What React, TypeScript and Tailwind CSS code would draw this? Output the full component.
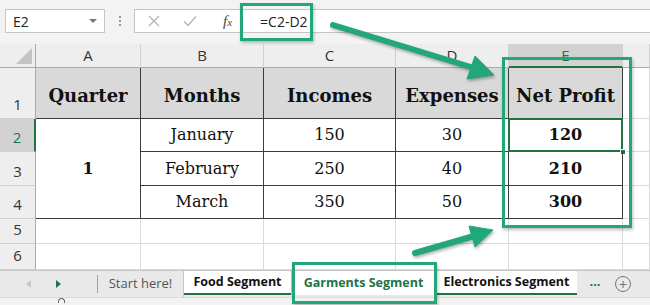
import React from 'react';

const serif = { fontFamily: '"DejaVu Serif", "Liberation Serif", serif' };
const ui = { fontFamily: '"Open Sans", "Noto Sans", Arial, sans-serif' };

const cols = ['A', 'B', 'C', 'D', 'E', ''];

const rows = [
  { n: 2, month: 'January', inc: '150', exp: '30', net: '120' },
  { n: 3, month: 'February', inc: '250', exp: '40', net: '210' },
  { n: 4, month: 'March', inc: '350', exp: '50', net: '300' },
];

function RowHead({ n, active }: { n: number; active?: boolean }) {
  return (
    <div
      className={
        'flex items-end justify-center pb-[3px] text-[15px] border-b border-[#d0d0d0] ' +
        (active
          ? 'bg-[#d2d2d2] text-[#217346] border-r-2 border-r-[#217346]'
          : 'bg-[#eeeeee] text-[#333] border-r border-r-[#ababab]')
      }
      style={ui}
    >
      {n}
    </div>
  );
}

function Cell({ children, bold, className = '' }: { children?: React.ReactNode; bold?: boolean; className?: string }) {
  return (
    <div
      className={
        'flex items-center justify-center border-r border-b border-[#3c3c3c] text-[16px] text-[#111] ' +
        (bold ? 'font-bold ' : '') +
        className
      }
      style={serif}
    >
      {children}
    </div>
  );
}

function Empty() {
  return <div className="border-r border-b border-[#dadada] bg-white" />;
}

export default function App() {
  return (
    <div className="relative w-[650px] h-[305px] overflow-hidden bg-white" style={ui}>
      {/* Formula bar */}
      <div className="h-[44px] bg-[#f3f3f3] flex items-start pt-[9px] pl-[5px]">
        <div className="w-[100px] h-[24px] bg-white border border-[#c6c6c6] flex items-center justify-between px-[7px] text-[14px] text-[#222]">
          <span>E2</span>
          <span className="w-0 h-0 border-l-[4px] border-r-[4px] border-t-[4px] border-l-transparent border-r-transparent border-t-[#777]" />
        </div>
        <div className="w-[29px] h-[24px] flex flex-col items-center justify-center gap-[2px]">
          <span className="w-[2px] h-[2px] bg-[#999]" />
          <span className="w-[2px] h-[2px] bg-[#999]" />
          <span className="w-[2px] h-[2px] bg-[#999]" />
        </div>
        <div className="flex-1 h-[24px] bg-white border border-[#c6c6c6] border-r-0 flex items-center text-[14px]">
          <svg width="12" height="12" viewBox="0 0 12 12" className="ml-[13px]">
            <path d="M1 1 L11 11 M11 1 L1 11" stroke="#b3b3b3" strokeWidth="1.3" />
          </svg>
          <svg width="14" height="12" viewBox="0 0 14 12" className="ml-[23px]">
            <path d="M1 6.5 L5 10.5 L13 1.5" stroke="#b3b3b3" strokeWidth="1.4" fill="none" />
          </svg>
          <span className="ml-[26px] italic text-[15px] text-[#444]" style={{ fontFamily: '"Liberation Serif", serif' }}>
            f<span className="text-[11px]">x</span>
          </span>
          <span className="ml-[28px] text-[#222]">=C2-D2</span>
        </div>
      </div>

      {/* Sheet grid */}
      <div className="grid grid-cols-[36px_105px_123px_132px_113px_114px_1fr] grid-rows-[24px_51px_33px_34px_33px_25px_26px]">
        {/* column headers */}
        <div className="bg-[#eeeeee] border-r border-b border-[#ababab] flex items-end justify-end p-[3px]">
          <svg width="16" height="16" viewBox="0 0 16 16">
            <polygon points="16,0 16,16 0,16" fill="#c4c4c4" />
          </svg>
        </div>
        {cols.map((c, i) => (
          <div
            key={i}
            className={
              'flex items-center justify-center text-[15px] border-r border-[#d0d0d0] ' +
              (c === 'E'
                ? 'bg-[#d2d2d2] text-[#217346] border-b-2 border-b-[#217346]'
                : 'bg-[#eeeeee] text-[#333] border-b border-b-[#ababab]')
            }
          >
            {c}
          </div>
        ))}

        {/* row 1 */}
        <RowHead n={1} />
        {['Quarter', 'Months', 'Incomes', 'Expenses', 'Net Profit'].map((h) => (
          <Cell key={h} bold className="bg-[#d9d9d9] text-[18px] pt-[4px]">
            {h}
          </Cell>
        ))}
        <Empty />

        {/* rows 2-4 */}
        {rows.map((r, i) => (
          <React.Fragment key={r.n}>
            <RowHead n={r.n} active={i === 0} />
            {i === 0 && (
              <Cell bold className="row-span-3 text-[14px]">
                1
              </Cell>
            )}
            <Cell>{r.month}</Cell>
            <Cell>{r.inc}</Cell>
            <Cell>{r.exp}</Cell>
            <Cell bold className="relative">
              {r.net}
              {i === 0 && (
                <>
                  <span className="absolute -left-[1px] -top-[1px] -right-[1px] -bottom-[1px] border-2 border-[#217346]" />
                  <span className="absolute -right-[4px] -bottom-[4px] w-[6px] h-[6px] bg-[#217346] border border-white" />
                </>
              )}
            </Cell>
            <Empty />
          </React.Fragment>
        ))}

        {/* rows 5-6 */}
        {[5, 6].map((n) => (
          <React.Fragment key={n}>
            <RowHead n={n} />
            {cols.map((_, i) => (
              <Empty key={i} />
            ))}
          </React.Fragment>
        ))}
      </div>

      {/* Sheet tabs */}
      <div className="h-[27px] bg-[#e9e9e9] border-t border-[#c6c6c6] flex items-stretch text-[13px]">
        <div className="w-[98px] flex items-center border-r border-[#a0a0a0] my-[4px]">
          <span className="ml-[26px] w-0 h-0 border-y-[4px] border-r-[5px] border-y-transparent border-r-[#c8c8c8]" />
          <span className="ml-[25px] w-0 h-0 border-y-[4px] border-l-[5px] border-y-transparent border-l-[#217346]" />
        </div>
        <div className="w-[86px] flex items-center justify-center text-[#555] border-r border-[#c6c6c6]">Start here!</div>
        <div className="w-[107px] flex items-center justify-center bg-white font-bold text-[12.5px] text-[#111] border-b-2 border-[#217346] mb-[2px]">
          Food Segment
        </div>
        <div className="w-[145px] flex items-center justify-center bg-white font-bold text-[12.5px] text-[#217346] border-l border-r border-[#c6c6c6] mb-[2px]">
          Garments Segment
        </div>
        <div className="w-[141px] flex items-center justify-center bg-white font-bold text-[12.5px] text-[#111] border-b-2 border-[#217346] mb-[2px]">
          Electronics Segment
        </div>
        <div className="w-[36px] flex items-center justify-center font-bold text-[#217346] pb-[4px]">...</div>
        <div className="flex items-center pl-[2px]">
          <span className="w-[16px] h-[16px] rounded-full border-[1.5px] border-[#777] flex items-center justify-center text-[#777] text-[15px] leading-none">
            +
          </span>
        </div>
      </div>
      <div className="h-[8px] bg-[#f3f3f3] border-t border-[#dcdcdc] pl-[58px]">
        <span className="block w-[7px] h-[5px] border-t border-l border-r border-[#666] rounded-t-full" />
      </div>

      {/* annotations */}
      <div className="absolute left-[240px] top-[3px] w-[73px] h-[38px] border-[3px] border-[#22a878] shadow-[1px_2px_3px_rgba(0,0,0,0.25)]" />
      <div className="absolute left-[502px] top-[57px] w-[130px] h-[171px] border-[3px] border-[#22a878] shadow-[1px_2px_3px_rgba(0,0,0,0.25)]" />
      <div className="absolute left-[292px] top-[262px] w-[145px] h-[42px] border-[3px] border-[#22a878] shadow-[1px_2px_3px_rgba(0,0,0,0.25)]" />
      <svg className="absolute left-0 top-0 pointer-events-none" width="650" height="305" viewBox="0 0 650 305">
        <g style={{ filter: 'drop-shadow(1px 2px 1.5px rgba(0,0,0,0.3))' }} fill="#22a878" stroke="#22a878">
          <line x1="333" y1="25" x2="474" y2="68" strokeWidth="6" strokeLinecap="round" />
          <polygon points="494,75 475,56 467,79" strokeWidth="1" strokeLinejoin="round" />
          <line x1="415" y1="253" x2="474" y2="236" strokeWidth="6" strokeLinecap="round" />
          <polygon points="493,230 469,226 475,247" strokeWidth="1" strokeLinejoin="round" />
        </g>
      </svg>
    </div>
  );
}
